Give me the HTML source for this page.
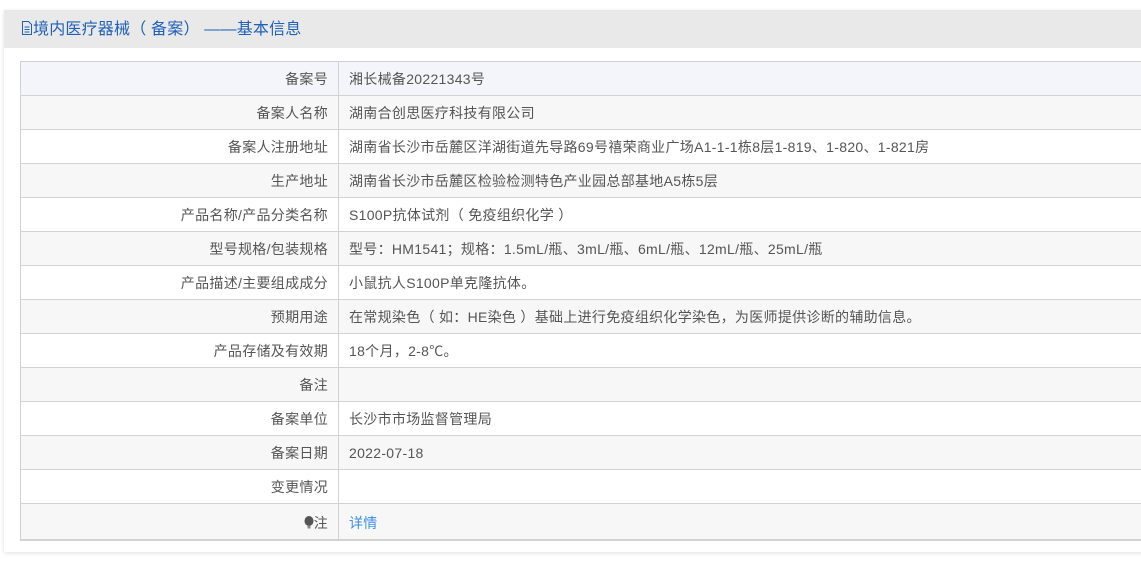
<!DOCTYPE html>
<html><head><meta charset="utf-8"><style>
body{margin:0;background:#fff;font-family:"Liberation Sans","Noto Sans CJK SC",sans-serif;width:1141px;height:569px;overflow:hidden;}
.panel{position:absolute;left:4px;top:10px;width:1160px;height:542px;background:#fff;box-shadow:0 1px 4px rgba(0,0,0,.12);}
.hd{height:38px;background:#e9e9e9;color:#2060b8;font-size:16px;line-height:40px;padding-left:17px;letter-spacing:.2px}
table{position:absolute;left:16px;top:51px;border-collapse:collapse;width:1140px;font-size:14px;color:#555;letter-spacing:.3px}
td{border:1px solid #d2d2d2;height:33px;padding:0 10px;}
td.l{text-align:right;width:297px;}
tr:nth-child(even){background:#f7f7f7}
tr:first-child{background:#f4f5fa}
tr:last-child td{border-bottom:2px solid #d2d2d2;padding-top:2px}
a{color:#3b8fe6;text-decoration:none}
</style></head><body>
<div class="panel"><div class="hd"><svg width="12" height="14" viewBox="0 0 12 14" style="vertical-align:-1px"><path d="M1.5 .5h6l3 3v10h-9z" fill="none" stroke="#2060b8"/><path d="M3.5 6h5M3.5 8.5h5M3.5 11h5" stroke="#2060b8"/></svg>境内医疗器械（ 备案） ——基本信息</div>
<table>
<tr><td class="l">备案号</td><td>湘长械备20221343号</td></tr>
<tr><td class="l">备案人名称</td><td>湖南合创思医疗科技有限公司</td></tr>
<tr><td class="l">备案人注册地址</td><td>湖南省长沙市岳麓区洋湖街道先导路69号禧荣商业广场A1-1-1栋8层1-819、1-820、1-821房</td></tr>
<tr><td class="l">生产地址</td><td>湖南省长沙市岳麓区检验检测特色产业园总部基地A5栋5层</td></tr>
<tr><td class="l">产品名称/产品分类名称</td><td>S100P抗体试剂（ 免疫组织化学 ）</td></tr>
<tr><td class="l">型号规格/包装规格</td><td>型号：HM1541；规格：1.5mL/瓶、3mL/瓶、6mL/瓶、12mL/瓶、25mL/瓶</td></tr>
<tr><td class="l">产品描述/主要组成成分</td><td>小鼠抗人S100P单克隆抗体。</td></tr>
<tr><td class="l">预期用途</td><td>在常规染色（ 如：HE染色 ）基础上进行免疫组织化学染色，为医师提供诊断的辅助信息。</td></tr>
<tr><td class="l">产品存储及有效期</td><td>18个月，2-8℃。</td></tr>
<tr><td class="l">备注</td><td></td></tr>
<tr><td class="l">备案单位</td><td>长沙市市场监督管理局</td></tr>
<tr><td class="l">备案日期</td><td>2022-07-18</td></tr>
<tr><td class="l">变更情况</td><td></td></tr>
<tr><td class="l"><svg width="10" height="13" viewBox="0 0 10 13" style="vertical-align:-1px"><ellipse cx="5" cy="5" rx="4.5" ry="5" fill="#555"/><rect x="3.5" y="10" width="3" height="2.5" fill="#888"/></svg>注</td><td><a>详情</a></td></tr>
</table></div>
</body></html>
